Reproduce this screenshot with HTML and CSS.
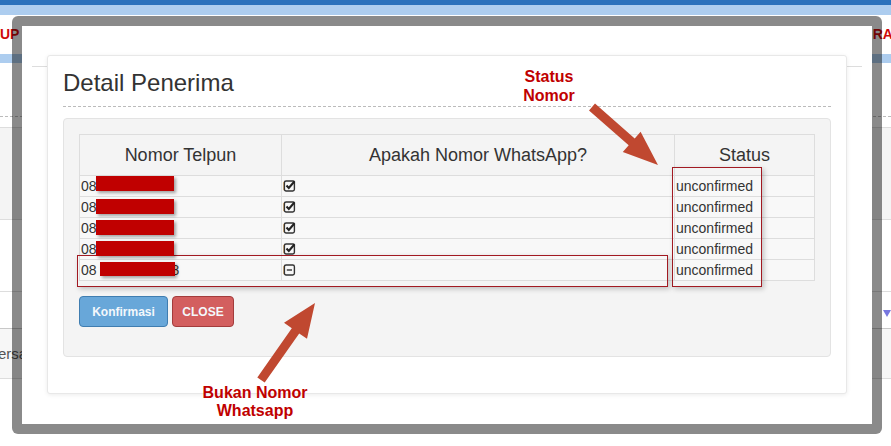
FILE: index.html
```html
<!DOCTYPE html>
<html>
<head>
<meta charset="utf-8">
<title>Detail Penerima</title>
<link rel="stylesheet" href="styles.css">
</head>
<body>
<div class="page">
  <div class="topbar"></div>
  <div class="subbar"></div>
  <div class="nav"><span class="nav-item">UP</span><span class="nav-item nav-right">RAN</span></div>
  <div class="subbar strip"></div>
  <div class="sec-head"></div>
  <div class="sec-gray"></div>
  <div class="sec-row"></div>
  <div class="sec-row2"><span class="caret"></span></div>
  <div class="sec-foot"><span class="foot-text">ersa</span></div>
</div>

<div class="modal">
  <div class="modal-rule"></div>
  <div class="card">
    <h3 class="title">Detail Penerima</h3>
    <div class="well">
      <table class="grid">
        <colgroup><col class="c1"><col class="c2"><col class="c3"></colgroup>
        <thead>
          <tr><th>Nomor Telpun</th><th>Apakah Nomor WhatsApp?</th><th>Status</th></tr>
        </thead>
        <tbody>
          <tr>
            <td>08<span class="redact r-first"></span></td>
            <td class="ico-cell"><svg class="ico" width="13" height="13" viewBox="0 0 13 13"><path d="M0.9 2.8 V11.2" stroke="#e39a3a" stroke-width="0.9"/><rect x="1.4" y="2" width="10" height="10" rx="1.7" fill="none" stroke="#333" stroke-width="1.4"/><path d="M3.5 6.6 L5.8 9 L11.6 2.2" fill="none" stroke="#222" stroke-width="2.1"/></svg></td>
            <td>unconfirmed</td>
          </tr>
          <tr>
            <td>08<span class="redact"></span></td>
            <td class="ico-cell"><svg class="ico" width="13" height="13" viewBox="0 0 13 13"><path d="M0.9 2.8 V11.2" stroke="#e39a3a" stroke-width="0.9"/><rect x="1.4" y="2" width="10" height="10" rx="1.7" fill="none" stroke="#333" stroke-width="1.4"/><path d="M3.5 6.6 L5.8 9 L11.6 2.2" fill="none" stroke="#222" stroke-width="2.1"/></svg></td>
            <td>unconfirmed</td>
          </tr>
          <tr>
            <td>08<span class="redact"></span></td>
            <td class="ico-cell"><svg class="ico" width="13" height="13" viewBox="0 0 13 13"><path d="M0.9 2.8 V11.2" stroke="#e39a3a" stroke-width="0.9"/><rect x="1.4" y="2" width="10" height="10" rx="1.7" fill="none" stroke="#333" stroke-width="1.4"/><path d="M3.5 6.6 L5.8 9 L11.6 2.2" fill="none" stroke="#222" stroke-width="2.1"/></svg></td>
            <td>unconfirmed</td>
          </tr>
          <tr>
            <td>08<span class="redact"></span></td>
            <td class="ico-cell"><svg class="ico" width="13" height="13" viewBox="0 0 13 13"><path d="M0.9 2.8 V11.2" stroke="#e39a3a" stroke-width="0.9"/><rect x="1.4" y="2" width="10" height="10" rx="1.7" fill="none" stroke="#333" stroke-width="1.4"/><path d="M3.5 6.6 L5.8 9 L11.6 2.2" fill="none" stroke="#222" stroke-width="2.1"/></svg></td>
            <td>unconfirmed</td>
          </tr>
          <tr>
            <td>08<span class="redact r-last"></span><span class="tail">8</span></td>
            <td class="ico-cell"><svg class="ico" width="13" height="13" viewBox="0 0 13 13"><path d="M0.9 2.8 V11.2" stroke="#e39a3a" stroke-width="0.9"/><rect x="1.4" y="2" width="10" height="10" rx="1.7" fill="none" stroke="#333" stroke-width="1.4"/><path d="M3.8 7 H9" fill="none" stroke="#333" stroke-width="1.4"/></svg></td>
            <td>unconfirmed</td>
          </tr>
        </tbody>
      </table>
      <div class="actions">
        <button class="btn btn-blue">Konfirmasi</button>
        <button class="btn btn-red">CLOSE</button>
      </div>
    </div>
  </div>
</div>

<div class="annot">
  <svg class="arrows" width="891" height="446" viewBox="0 0 891 446">
    <polygon fill="#c04830" points="595,103.6 634.7,138.5 640.6,131.8 658,165 622.8,152 628.7,145.3 589,110.4"/>
    <polygon fill="#c04830" points="257.3,377.4 291.8,328.2 284,322.8 315,303 307,338.8 299.2,333.4 264.7,382.6"/>
  </svg>
  <div class="box box-status"></div>
  <div class="box box-row"></div>
  <div class="label label-status">Status<br>Nomor</div>
  <div class="label label-wa">Bukan Nomor<br>Whatsapp</div>
</div>
</body>
</html>
```

FILE: styles.css
```css
* { box-sizing: border-box; }

html, body {
  margin: 0;
  padding: 0;
}

body {
  width: 891px;
  height: 446px;
  overflow: hidden;
  position: relative;
  font-family: "Liberation Sans", Arial, sans-serif;
  color: #333;
  background: #fff;
}

/* ---------- background page ---------- */
.topbar { height: 5px; background: #2a71bc; }
.subbar { height: 10px; background: #adcdef; }
.strip { height: 9px; }

.nav {
  height: 39px;
  display: flex;
  justify-content: space-between;
  align-items: center;
  line-height: 39px;
  font-size: 14px;
  font-weight: bold;
  color: #cf0a0a;
}
.nav-right { margin-right: -12px; }

.sec-head { height: 54px; border-bottom: 1px dashed #bbb; }
.sec-gray {
  margin-top: 10px;
  height: 93px;
  background: #f4f4f4;
  border-top: 1px solid #ddd;
  border-bottom: 1px solid #ddd;
}
.sec-row { height: 72px; border-bottom: 1px solid #ddd; }
.sec-row2 {
  height: 37px;
  border-bottom: 1px solid #c8c8c8;
  display: flex;
  justify-content: flex-end;
  align-items: center;
}
.caret {
  width: 0;
  height: 0;
  border-left: 4px solid transparent;
  border-right: 4px solid transparent;
  border-top: 7px solid #7878e0;
  margin-top: 6px;
}
.sec-foot {
  height: 50px;
  background: #f7f7f7;
  border-bottom: 1px solid #ddd;
  display: flex;
  align-items: center;
  font-size: 15px;
  color: #555;
}
.foot-text { margin-left: -2px; }

/* ---------- modal window ---------- */
.modal {
  position: absolute;
  left: 12px;
  top: 16px;
  width: 870px;
  height: 418px;
  border: 10px solid rgba(0, 0, 0, 0.46);
  border-radius: 6px;
  background: #fff;
  background-clip: padding-box;
  padding: 40px 10px 0;
}

.modal-rule { height: 1px; background: #ddd; }

.card {
  margin: -12px 15px 0;
  background: #fff;
  border: 1px solid #e8e8e8;
  border-radius: 3px;
  box-shadow: 0 1px 4px rgba(0, 0, 0, 0.08);
  padding: 14px 15px 36px;
}

.title {
  margin: 0;
  font-size: 24px;
  font-weight: normal;
  line-height: 26px;
  color: #333;
  padding-bottom: 10px;
  border-bottom: 1px dashed #bbb;
}

.well {
  margin-top: 11px;
  background: #f4f4f4;
  border: 1px solid #e3e3e3;
  border-radius: 4px;
  padding: 15px;
}

.grid {
  border-collapse: collapse;
  table-layout: fixed;
  width: 735px;
}
.c1 { width: 202px; }
.c2 { width: 393px; }
.c3 { width: 140px; }

.grid th {
  border: 1px solid #ddd;
  font-size: 18px;
  font-weight: normal;
  line-height: 20px;
  padding: 10px 0;
  text-align: center;
  color: #333;
}

.grid td {
  border: 1px solid #ddd;
  font-size: 14px;
  line-height: 20px;
  height: 20px;
  padding: 0 1px;
  background: #f8f8f8;
  color: #333;
  white-space: nowrap;
}

.ico-cell { padding-left: 0; }
.ico { display: inline-block; vertical-align: middle; margin-top: -3px; }

.redact {
  display: inline-block;
  vertical-align: top;
  width: 78px;
  height: 15px;
  margin-top: 2px;
  margin-left: -1px;
  background: #c00000;
  box-shadow: 2px 2px 3px rgba(0, 0, 0, 0.35);
  position: relative;
  z-index: 1;
}
.r-first { margin-top: 0; }
.r-last {
  width: 75px;
  height: 14px;
  margin-left: 3px;
  margin-right: -3px;
}
.tail { position: relative; }

.actions {
  margin-top: 15px;
  margin-bottom: 14px;
  display: flex;
  gap: 4px;
}

.btn {
  height: 31px;
  border-radius: 4px;
  border: 1px solid;
  font-family: "Liberation Sans", Arial, sans-serif;
  font-size: 12px;
  font-weight: bold;
  color: #f4f8fc;
  padding: 0;
  text-align: center;
}
.btn-blue { width: 89px; background: #68a7d9; border-color: #3f7db0; }
.btn-red { width: 62px; background: #d35f5f; border-color: #a33c3c; }

/* ---------- annotations over the screenshot ---------- */
.annot {
  position: absolute;
  left: 0;
  top: 0;
  width: 891px;
  height: 446px;
  pointer-events: none;
}
.arrows { position: absolute; left: 0; top: 0; }

.box {
  position: absolute;
  border: 1px solid #a21a22;
  box-shadow: 2px 2px 5px rgba(0, 0, 0, 0.22);
}
.box-status { left: 672px; top: 167px; width: 90px; height: 120px; }
.box-row { left: 77px; top: 255px; width: 591px; height: 32px; }

.label {
  position: absolute;
  text-align: center;
  font-size: 16px;
  font-weight: bold;
  color: #c00000;
}
.label-status { left: 499px; top: 67px; width: 100px; line-height: 19px; }
.label-wa { left: 195px; top: 384px; width: 120px; line-height: 18px; }
```
